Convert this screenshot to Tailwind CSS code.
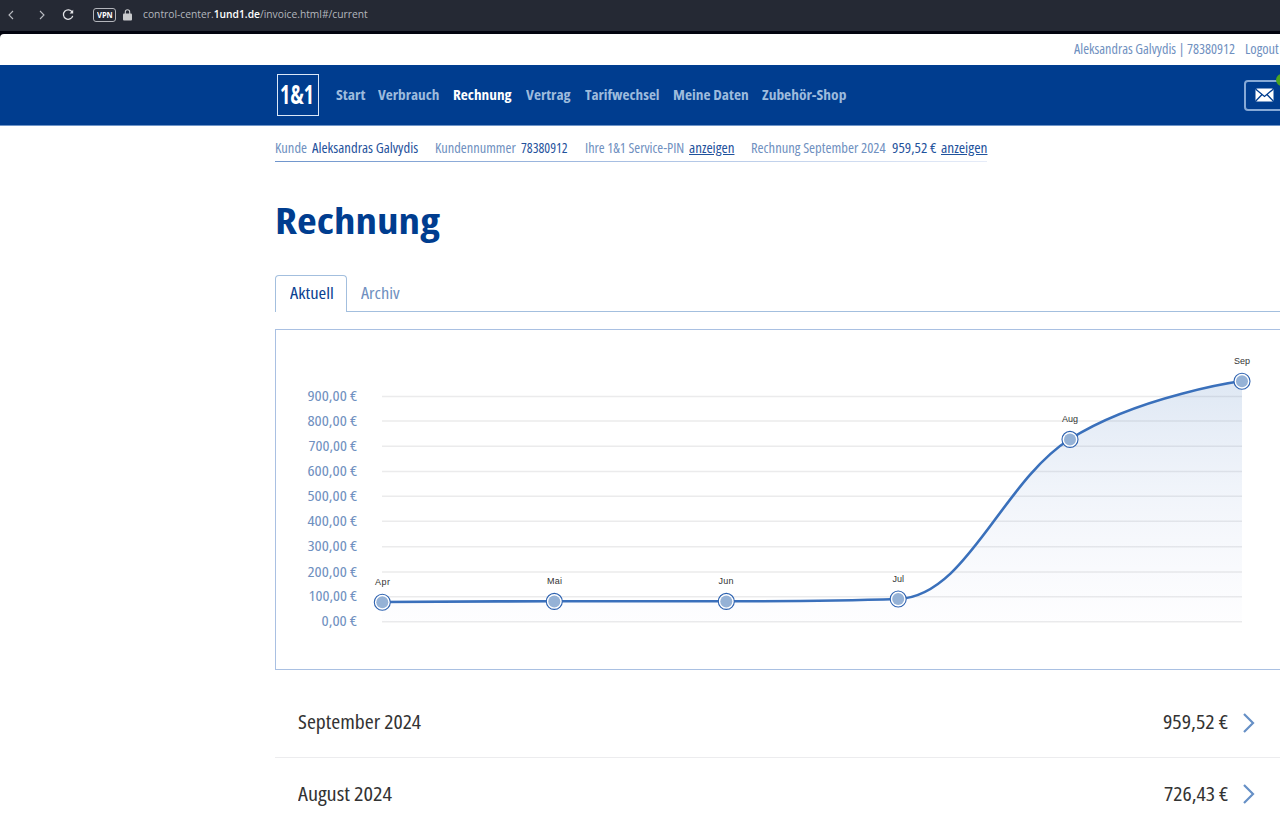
<!DOCTYPE html>
<html lang="de">
<head>
  <meta charset="UTF-8">
  <meta name="viewport" content="width=device-width, initial-scale=1.0">
  <title>Rechnung</title>
  <script src="https://cdn.jsdelivr.net/npm/@tailwindcss/browser@4"></script>
</head>
<body class="bg-white font-['Open_Sans','Noto_Sans',sans-serif] font-stretch-condensed h-[819px] overflow-hidden">

  <!-- Browser bar -->
  <div class="bg-[#02030f] overflow-hidden">
    <div class="h-[31px] bg-[#252934] flex items-center pb-[2px] font-stretch-normal">
      <svg class="w-[90px] h-[29px] shrink-0" viewBox="0 0 90 29" fill="none" stroke="#b9bbc1" stroke-width="1.1">
        <path d="M13 11l-4 4 4 4M40 11l4 4-4 4" />
        <path d="M72.2 12.2a4.7 4.7 0 1 0 .5 3.6" stroke="#e4e5e8" stroke-width="1.3" />
        <path d="M73.2 9.8v3.6h-3.6z" fill="#e4e5e8" stroke="none" />
      </svg>
      <div class="ml-[3px] w-[23px] h-[14px] border border-[#b4b6bc] rounded-[3px] flex items-center justify-center text-[8px] leading-none font-bold text-white"><div class="w-[16px]"><span data-fit class="inline-block origin-left">VPN</span></div></div>
      <svg class="ml-[7px] w-[9px] h-[12px]" viewBox="0 0 9 12">
        <path d="M2.3 5V3a2.2 2.2 0 0 1 4.4 0v2" fill="none" stroke="#c9cacd" stroke-width="1.1" />
        <rect y="4.5" width="9" height="7" rx="1" fill="#c9cacd" />
      </svg>
      <div class="ml-[11px] w-[225px] pb-px text-[11px] leading-4 text-[#b4b7be] whitespace-nowrap"><span data-fit class="inline-block origin-left">control-center.<span class="text-white font-semibold">1und1.de</span>/invoice.html#/current</span></div>
    </div>
    <div class="mt-[3px] h-[31px] bg-white rounded-tl-[4px] flex items-center pb-[2px] text-sm leading-5 text-[#6f90c0] whitespace-nowrap">
      <div class="ml-[1074px] w-[161.5px] shrink-0"><span data-fit class="inline-block origin-left">Aleksandras Galvydis | 78380912</span></div>
      <div class="ml-[9.5px] w-[34px] shrink-0"><span data-fit class="inline-block origin-left">Logout</span></div>
    </div>
  </div>

  <!-- Navigation -->
  <header class="h-[61px] bg-[#003d8f] border-b border-[#6f95c8] flex items-center pl-[277px] overflow-hidden">
    <div class="w-[42px] h-[42px] shrink-0 border border-[#dbe7f7] flex items-center justify-center pb-[3px] pr-[2px] text-white font-bold text-[26px] leading-none whitespace-nowrap font-stretch-normal">
      <div class="w-[34px]"><span data-fit class="inline-block origin-left">1&amp;1</span></div>
    </div>
    <nav class="ml-[16.5px] flex gap-[13.75px] text-sm leading-5 font-bold text-[#9dbbdd] whitespace-nowrap">
      <a class="w-[29px]"><span data-fit class="inline-block origin-left">Start</span></a>
      <a class="w-[61px]"><span data-fit class="inline-block origin-left">Verbrauch</span></a>
      <a class="w-[59px] text-white"><span data-fit class="inline-block origin-left">Rechnung</span></a>
      <a class="w-[45px]"><span data-fit class="inline-block origin-left">Vertrag</span></a>
      <a class="w-[75px]"><span data-fit class="inline-block origin-left">Tarifwechsel</span></a>
      <a class="w-[76px]"><span data-fit class="inline-block origin-left">Meine Daten</span></a>
      <a class="w-[84px] -ml-px"><span data-fit class="inline-block origin-left">Zubehör-Shop</span></a>
    </nav>
    <div class="relative ml-auto -mr-3 w-[48px] h-[31px] shrink-0 border-2 border-[#86a9d6] rounded-[4px] flex items-center pl-[9px]">
      <svg class="w-[19px] h-[14px]" viewBox="0 0 19 14">
        <rect x=".5" y=".5" width="18" height="13" rx="1.5" fill="#fff" />
        <path d="M.8 1.2l8.7 7.3 8.7-7.3M.8 13l6-6.3M18.2 13l-6-6.3" fill="none" stroke="#003d8f" stroke-width="1.3" />
      </svg>
      <span class="absolute left-[30px] -top-[8px] w-[12px] h-[12px] rounded-full bg-[#4da51f]"></span>
    </div>
  </header>

  <!-- Customer line -->
  <main class="ml-[275px]">
    <div class="h-[35px] pt-[12px] flex text-sm leading-5 text-[#6f90c0] whitespace-nowrap">
      <div class="w-[32px]"><span data-fit class="inline-block origin-left">Kunde</span></div>
      <div class="ml-[5px] w-[106px] text-[#1f529c]"><span data-fit class="inline-block origin-left">Aleksandras Galvydis</span></div>
      <div class="ml-[17px] w-[81px]"><span data-fit class="inline-block origin-left">Kundennummer</span></div>
      <div class="ml-[5px] w-[47px] text-[#1f529c]"><span data-fit class="inline-block origin-left">78380912</span></div>
      <div class="ml-[17px] w-[99px]"><span data-fit class="inline-block origin-left">Ihre 1&amp;1 Service-PIN</span></div>
      <div class="ml-[5px] w-[45px] text-[#1f529c]"><span data-fit class="inline-block origin-left underline">anzeigen</span></div>
      <div class="ml-[17px] w-[135px]"><span data-fit class="inline-block origin-left">Rechnung September 2024</span></div>
      <div class="ml-[6px] w-[44px] text-[#1f529c]"><span data-fit class="inline-block origin-left">959,52 €</span></div>
      <div class="ml-[5px] w-[46px] text-[#1f529c]"><span data-fit class="inline-block origin-left underline">anzeigen</span></div>
    </div>
    <div class="h-px w-[712px] bg-linear-to-r from-[#6f95cc] to-[#e6ecf8]"></div>

    <h1 class="mt-[34px] w-[165px] text-[36px] leading-[50px] font-bold text-[#003d8f] whitespace-nowrap"><span data-fit class="inline-block origin-left">Rechnung</span></h1>

    <!-- Tabs -->
    <div class="mt-[29px] flex h-[37px] text-base leading-6 whitespace-nowrap">
      <div class="w-[72px] border border-b-0 border-[#a3bfde] rounded-t-[4px] pt-[5px] pl-[13.5px] text-[#0b4291]"><div class="w-[44px]"><span data-fit class="inline-block origin-left">Aktuell</span></div></div>
      <div class="grow border-b border-[#a3bfde] pt-[5.5px] pl-[13.5px] text-[#6f90c0]"><div class="w-[39px]"><span data-fit class="inline-block origin-left">Archiv</span></div></div>
    </div>

    <!-- Chart -->
    <div class="mt-[17px] h-[341px] border border-r-0 border-[#a9c0e2]">
      <svg class="block w-[1004px] h-[339px]" viewBox="276 330 1004 339">
        <defs>
          <linearGradient id="area" x1="0" y1="0" x2="0" y2="1">
            <stop offset="0" stop-color="#356fb8" stop-opacity=".16" />
            <stop offset=".45" stop-color="#4a78c4" stop-opacity=".08" />
            <stop offset="1" stop-color="#6a80d0" stop-opacity=".01" />
          </linearGradient>
        </defs>
        <path d="M382 396.5H1242M382 421H1242M382 446.3H1242M382 471.5H1242M382 496.2H1242M382 521.3H1242M382 546.7H1242M382 572H1242M382 596.8H1242M382 621.8H1242" stroke="#ebebec" stroke-width="1.6" />
        <g class="fill-[#6f90c0] text-[14.5px]">
          <text x="307.5" y="401" textLength="49.5" lengthAdjust="spacingAndGlyphs">900,00 €</text>
          <text x="307.5" y="425.6" textLength="49.5" lengthAdjust="spacingAndGlyphs">800,00 €</text>
          <text x="308.5" y="451" textLength="48.5" lengthAdjust="spacingAndGlyphs">700,00 €</text>
          <text x="307.5" y="476" textLength="49.5" lengthAdjust="spacingAndGlyphs">600,00 €</text>
          <text x="307.5" y="501" textLength="49.5" lengthAdjust="spacingAndGlyphs">500,00 €</text>
          <text x="307.5" y="526" textLength="49.5" lengthAdjust="spacingAndGlyphs">400,00 €</text>
          <text x="307.5" y="551.3" textLength="49.5" lengthAdjust="spacingAndGlyphs">300,00 €</text>
          <text x="307.5" y="576.6" textLength="49.5" lengthAdjust="spacingAndGlyphs">200,00 €</text>
          <text x="308.5" y="601" textLength="48.5" lengthAdjust="spacingAndGlyphs">100,00 €</text>
          <text x="321.5" y="626.2" textLength="35.5" lengthAdjust="spacingAndGlyphs">0,00 €</text>
        </g>
        <path d="M382 602C382 602 485 601.3 554 601.3S657 601.3 726 601.3S829 601.3 898 599C966.8 596.7 1001.2 482.6 1070 439C1138.8 395.4 1242 381 1242 381V622H382z" fill="url(#area)" />
        <path d="M382 602C382 602 485 601.3 554 601.3S657 601.3 726 601.3S829 601.3 898 599C966.8 596.7 1001.2 482.6 1070 439C1138.8 395.4 1242 381 1242 381" fill="none" stroke="#3a70bb" stroke-width="2.6" />
        <g fill="#fff" stroke="#2d62b0" stroke-width="1.1">
          <circle cx="382.3" cy="602.2" r="8" />
          <circle cx="554.3" cy="601.4" r="8" />
          <circle cx="726.3" cy="601.4" r="8" />
          <circle cx="898.2" cy="599" r="8" />
          <circle cx="1070" cy="439.4" r="8" />
          <circle cx="1242" cy="381.2" r="8" />
        </g>
        <g fill="#95b2d6">
          <circle cx="382.3" cy="602.2" r="6" />
          <circle cx="554.3" cy="601.4" r="6" />
          <circle cx="726.3" cy="601.4" r="6" />
          <circle cx="898.2" cy="599" r="6" />
          <circle cx="1070" cy="439.4" r="6" />
          <circle cx="1242" cy="381.2" r="6" />
        </g>
        <g class="font-['Liberation_Sans',sans-serif] text-[9px] fill-[#333]">
          <text x="375" y="585" textLength="15">Apr</text>
          <text x="547" y="584" textLength="15">Mai</text>
          <text x="718.5" y="584" textLength="15">Jun</text>
          <text x="892.5" y="582" textLength="11.5">Jul</text>
          <text x="1062" y="422.4" textLength="16">Aug</text>
          <text x="1234" y="364" textLength="16">Sep</text>
        </g>
      </svg>
    </div>

    <!-- Invoices -->
    <div class="pt-[17px] text-[20px] leading-7 text-[#333] whitespace-nowrap">
      <div class="h-[71px] pl-[22.5px] pr-[25px] flex items-center border-b border-[#ececee]">
        <div class="w-[123.5px]"><span data-fit class="inline-block origin-left">September 2024</span></div>
        <div class="ml-auto w-[65px]"><span data-fit class="inline-block origin-left">959,52 €</span></div>
        <svg class="ml-[15px] mt-px w-[12px] h-[20px]" viewBox="0 0 12 20" fill="none" stroke="#6690c6" stroke-width="2.2"><path d="M1 1l9 9-9 9" /></svg>
      </div>
      <div class="h-[71px] pl-[22.5px] pr-[25px] flex items-center">
        <div class="w-[94px]"><span data-fit class="inline-block origin-left">August 2024</span></div>
        <div class="ml-auto w-[64px]"><span data-fit class="inline-block origin-left">726,43 €</span></div>
        <svg class="ml-[15px] w-[12px] h-[20px]" viewBox="0 0 12 20" fill="none" stroke="#6690c6" stroke-width="2.2"><path d="M1 1l9 9-9 9" /></svg>
      </div>
    </div>
  </main>

  <script>
    // Condense each label to the width of its box
    window.addEventListener('load', () => {
      document.querySelectorAll('[data-fit]').forEach((el) => {
        const box = el.parentElement.getBoundingClientRect().width;
        el.style.transform = `scaleX(${box / el.offsetWidth})`;
      });
    });
  </script>
</body>
</html>
